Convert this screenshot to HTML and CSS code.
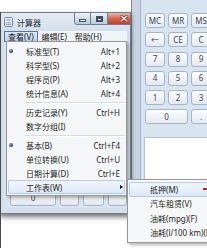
FILE: index.html
```html
<!DOCTYPE html>
<html lang="zh-CN">
<head>
<meta charset="utf-8">
<title>计算器</title>
<link rel="stylesheet" href="styles.css">
</head>
<body>
<div class="desk">
  <div class="win-right">
    <div class="rframe"></div>
    <div class="rbody">
      <div class="keypad">
        <div class="key">MC</div><div class="key">MR</div><div class="key">MS</div>
        <div class="key">←</div><div class="key">CE</div><div class="key">C</div>
        <div class="key">7</div><div class="key">8</div><div class="key">9</div>
        <div class="key">4</div><div class="key">5</div><div class="key">6</div>
        <div class="key">1</div><div class="key">2</div><div class="key">3</div>
        <div class="key wide">0</div><div class="key">.</div>
      </div>
      <div class="rpanel"></div>
    </div>
  </div>

  <div class="win-left">
    <div class="titlebar">
      <svg class="appicon" viewBox="0 0 9 10"><rect x="0.5" y="0.5" width="8" height="9" rx="1" fill="#eef2f7" stroke="#6f86a6"/><rect x="2" y="2" width="5" height="2" fill="#a9c6e8"/><rect x="2" y="5.2" width="1.4" height="1.2" fill="#7f93ad"/><rect x="3.8" y="5.2" width="1.4" height="1.2" fill="#7f93ad"/><rect x="5.6" y="5.2" width="1.4" height="1.2" fill="#7f93ad"/><rect x="2" y="7" width="1.4" height="1.2" fill="#7f93ad"/><rect x="3.8" y="7" width="1.4" height="1.2" fill="#7f93ad"/><rect x="5.6" y="7" width="1.4" height="1.2" fill="#7f93ad"/></svg>
      <span class="title">计算器</span>
      <div class="caps">
        <div class="cap min"><span class="g-min"></span></div>
        <div class="cap max"><span class="g-max"></span></div>
        <div class="cap close"><svg class="g-x" viewBox="0 0 8 7"><path d="M1 1 L7 6 M7 1 L1 6" stroke="#5a1a10" stroke-width="2.6" stroke-linecap="round"/><path d="M1 1 L7 6 M7 1 L1 6" stroke="#fff" stroke-width="1.4" stroke-linecap="round"/></svg></div>
      </div>
    </div>
    <div class="inner">
      <div class="menubar">
        <span class="mb-item active">查看(V)</span>
        <span class="mb-item">编辑(E)</span>
        <span class="mb-item">帮助(H)</span>
      </div>
      <div class="client">
        <div class="lkey w0"><span class="peek">0</span></div><div class="lkey w1"></div><div class="lkey w2"></div><div class="lkey w3"></div>
      </div>
    </div>
  </div>

  <div class="edge"></div>

  <div class="menu">
    <div class="mi"><span class="gut"><span class="dot"></span></span><span class="lbl">标准型(T)</span><span class="sc">Alt+1</span></div>
    <div class="mi"><span class="gut"></span><span class="lbl">科学型(S)</span><span class="sc">Alt+2</span></div>
    <div class="mi"><span class="gut"></span><span class="lbl">程序员(P)</span><span class="sc">Alt+3</span></div>
    <div class="mi"><span class="gut"></span><span class="lbl">统计信息(A)</span><span class="sc">Alt+4</span></div>
    <div class="sep"><span></span></div>
    <div class="mi"><span class="gut"></span><span class="lbl">历史记录(Y)</span><span class="sc">Ctrl+H</span></div>
    <div class="mi"><span class="gut"></span><span class="lbl">数字分组(I)</span><span class="sc"></span></div>
    <div class="sep"><span></span></div>
    <div class="mi"><span class="gut"><span class="dot"></span></span><span class="lbl">基本(B)</span><span class="sc">Ctrl+F4</span></div>
    <div class="mi"><span class="gut"></span><span class="lbl">单位转换(U)</span><span class="sc">Ctrl+U</span></div>
    <div class="mi"><span class="gut"></span><span class="lbl">日期计算(D)</span><span class="sc">Ctrl+E</span></div>
    <div class="mi hot"><span class="gut"></span><span class="lbl">工作表(W)</span><span class="sc"><span class="arrow"></span></span></div>
  </div>

  <div class="submenu">
    <div class="si hot"><span class="sgut"></span><span class="lbl">抵押(M)</span></div>
    <div class="si"><span class="sgut"></span><span class="lbl">汽车租赁(V)</span></div>
    <div class="si"><span class="sgut"></span><span class="lbl">油耗(mpg)(F)</span></div>
    <div class="si"><span class="sgut"></span><span class="lbl">油耗(l/100 km)(L)</span></div>
  </div>

  <div class="redmark"></div>
</div>
</body>
</html>
```

FILE: styles.css
```css
* { box-sizing: border-box; margin: 0; padding: 0; }
html, body { width: 207px; height: 248px; overflow: hidden; background: #fff; }
body {
  font-family: "Noto Sans", "Noto Sans CJK SC", sans-serif;
  font-size: 8px;
  color: #262626;
}
.desk { position: relative; width: 207px; height: 248px; overflow: hidden; background: #fff; }

/* right (second) calculator window */
.win-right { position: absolute; left: 131px; top: 0; width: 80px; height: 243px; display: flex; }
.rframe { width: 10px; background: #c8d5e4; border-left: 1px solid #7d8a99; border-right: 1px solid #a2b3c7; }
.rbody { flex: 1; display: flex; flex-direction: column; background: #d9e4f1; }
.keypad {
  height: 134px;
  padding: 13px 0 0 4px;
  display: grid;
  grid-template-columns: 20px 20px 20px;
  grid-auto-rows: 15px;
  column-gap: 3px;
  row-gap: 4.3px;
}
.key, .lkey {
  border: 1px solid #a7b4c4;
  border-radius: 3px;
  background: linear-gradient(#fcfdfe, #e3e9f1);
  display: flex; align-items: center; justify-content: center;
  color: #3a4654; font-size: 8px; line-height: 1;
}
.key.wide { grid-column: span 2; }
.rpanel { flex: 1; margin: 3px 0 0 3px; background: #fff; border-top: 1px solid #b4c4d8; border-left: 1px solid #b4c4d8; }

/* left calculator window */
.win-left {
  position: absolute; left: 0; top: 12px; width: 131px; height: 202px;
  border: 1px solid #6f7c8c;
  background: #d4dfec;
  display: flex; flex-direction: column;
  box-shadow: 0 3px 5px rgba(0,0,0,.55);
}
.titlebar {
  height: 18px; position: relative;
  display: flex; align-items: center;
  padding-left: 3px;
  background: linear-gradient(#e4eaf1, #d4dfec);
}
.appicon { width: 9px; height: 10px; margin-right: 4px; }
.title { font-size: 8px; color: #1e2a38; }
.caps { position: absolute; top: -1px; right: -1px; display: flex; height: 13px; }
.cap {
  height: 13px; border: 1px solid #6c7d92;
  background: linear-gradient(#eef3f8, #d3dde9 50%, #bccbdc);
  display: flex; align-items: center; justify-content: center;
}
.cap.min { width: 17px; border-radius: 0 0 0 3px; }
.cap.max { width: 17px; border-left: none; }
.cap.close {
  width: 23px; border-left: none;
  background: linear-gradient(#efb6a8, #da654d 50%, #c23f29);
  justify-content: flex-end; padding-right: 2px;
}
.g-min { width: 7px; height: 3px; background: #fff; border: 1px solid #3e4d60; margin-top: 4px; }
.g-max { width: 7px; height: 6px; border: 1px solid #3e4d60; border-top-width: 2px; background: #fff; box-shadow: inset 0 0 0 1px #3e4d60; }
.g-x { width: 8px; height: 7px; }

.inner { flex: 1; display: flex; flex-direction: column; margin: 0 3px 5px; }
.menubar { height: 11px; display: flex; align-items: center; background: #f0f4f9; }
.mb-item { height: 11px; line-height: 9px; padding: 0 3px; border: 1px solid transparent; color: #1b1b1b; }
.mb-item.active { border-color: #5a759b; background: linear-gradient(#dae6f4, #c3d5ea); }
.client { flex: 1; background: #d9e4f1; display: flex; align-items: flex-end; padding: 0 0 2px 6px; gap: 4px; }
.lkey { height: 16px; align-items: flex-end; }
.peek { line-height: 1; padding-bottom: 3px; }
.lkey.w0 { width: 48px; }
.lkey.w1 { width: 20px; }
.lkey.w2 { width: 21px; }
.lkey.w3 { width: 20px; }

.edge { position: absolute; left: 0; top: 12px; width: 1px; height: 236px; background: #4a4a4a; }

/* dropdown menu */
.menu {
  position: absolute; left: 6px; top: 41px; width: 121px;
  padding: 2px 1px 1px;
  background: #f5f6f7;
  border: 1px solid #979797;
  box-shadow: 2px 2px 3px rgba(0,0,0,.3);
}
.mi, .si {
  height: 14px; display: flex; align-items: center;
  border: 1px solid transparent; border-radius: 2px;
  white-space: nowrap;
}
.mi .gut { width: 17px; display: flex; align-items: center; }
.dot {
  width: 4px; height: 4px; border-radius: 50%;
  background: radial-gradient(circle at 35% 35%, #9db0d8, #1c2f66 70%);
}
.lbl { flex: 1; }
.mi .sc { padding-right: 4px; display: flex; align-items: center; justify-content: flex-end; }
.hot { border-color: #b3cbe6; background: linear-gradient(#f1f6fd, #dce8f7); }
.arrow {
  width: 0; height: 0; margin-right: -3px;
  border-left: 3px solid #111;
  border-top: 2.5px solid transparent;
  border-bottom: 2.5px solid transparent;
}
.sep { height: 5px; display: flex; align-items: center; padding-left: 17px; }
.sep span { flex: 1; border-top: 1px solid #dcdcdc; border-bottom: 1px solid #fff; }

/* submenu */
.submenu {
  position: absolute; left: 127px; top: 179px; width: 92px;
  padding: 2px 1px;
  background: #f5f6f7;
  border: 1px solid #979797;
  box-shadow: 2px 2px 3px rgba(0,0,0,.3);
}
.si { height: 14.5px; }
.sgut { width: 20px; }

.redmark { position: absolute; left: 203px; top: 188px; width: 4px; height: 2px; background: #d9221c; }
```
